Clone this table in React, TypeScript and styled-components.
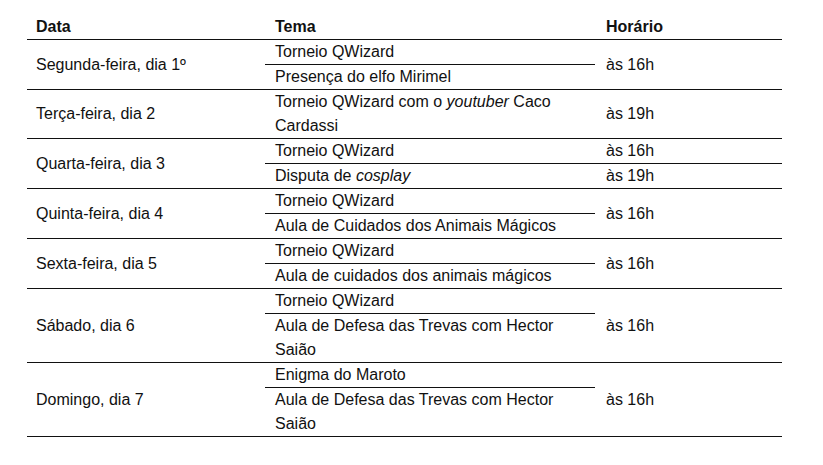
import React from 'react'
import styled, { createGlobalStyle, css } from 'styled-components'

const GlobalStyle = createGlobalStyle`
  html, body {
    margin: 0;
    background: #ffffff;
  }
  body {
    font-family: "Liberation Sans", Arial, Helvetica, sans-serif;
    color: #111111;
  }
`

const Page = styled.div`
  padding: 15px 0 0 27px;
`

const Table = styled.table`
  width: 755px;
  border-collapse: collapse;
  table-layout: fixed;
  font-size: 16px;
  line-height: 24px;

  th, td {
    box-sizing: border-box;
  }
`

const HeadRow = styled.tr`
  border-bottom: 1px solid #111;
`

const HeadCell = styled.th<{ $width: number; $pad: number }>`
  width: ${(p) => p.$width}px;
  padding: 0 0 0 ${(p) => p.$pad}px;
  text-align: left;
  font-weight: 700;
  vertical-align: middle;
`

const DayGroup = styled.tbody`
  border-bottom: 1px solid #111;
`

const DayCell = styled.td`
  padding: 0 0 0 9px;
  vertical-align: middle;
`

const dividedLine = css<{ $divided?: boolean }>`
  ${(p) => p.$divided && 'border-bottom: 1px solid #111;'}
`

const TopicCell = styled.td<{ $divided?: boolean }>`
  padding: 0 8px 0 10px;
  vertical-align: middle;
  ${dividedLine}
`

const TimeCell = styled.td<{ $divided?: boolean }>`
  padding: 0 0 0 11px;
  vertical-align: middle;
  ${dividedLine}
`

type Topic = { text: React.ReactNode; time?: string }
type Day = { day: string; topics: Topic[]; time?: string }

const days: Day[] = [
  {
    day: 'Segunda-feira, dia 1º',
    time: 'às 16h',
    topics: [{ text: 'Torneio QWizard' }, { text: 'Presença do elfo Mirimel' }],
  },
  {
    day: 'Terça-feira, dia 2',
    time: 'às 19h',
    topics: [
      {
        text: (
          <>
            Torneio QWizard com o <i>youtuber</i> Caco Cardassi
          </>
        ),
      },
    ],
  },
  {
    day: 'Quarta-feira, dia 3',
    topics: [
      { text: 'Torneio QWizard', time: 'às 16h' },
      {
        text: (
          <>
            Disputa de <i>cosplay</i>
          </>
        ),
        time: 'às 19h',
      },
    ],
  },
  {
    day: 'Quinta-feira, dia 4',
    time: 'às 16h',
    topics: [
      { text: 'Torneio QWizard' },
      { text: 'Aula de Cuidados dos Animais Mágicos' },
    ],
  },
  {
    day: 'Sexta-feira, dia 5',
    time: 'às 16h',
    topics: [
      { text: 'Torneio QWizard' },
      { text: 'Aula de cuidados dos animais mágicos' },
    ],
  },
  {
    day: 'Sábado, dia 6',
    time: 'às 16h',
    topics: [
      { text: 'Torneio QWizard' },
      { text: 'Aula de Defesa das Trevas com Hector Saião' },
    ],
  },
  {
    day: 'Domingo, dia 7',
    time: 'às 16h',
    topics: [
      { text: 'Enigma do Maroto' },
      { text: 'Aula de Defesa das Trevas com Hector Saião' },
    ],
  },
]

export default function App() {
  return (
    <Page>
      <GlobalStyle />
      <Table>
        <thead>
          <HeadRow>
            <HeadCell $width={238} $pad={9}>
              Data
            </HeadCell>
            <HeadCell $width={330} $pad={10}>
              Tema
            </HeadCell>
            <HeadCell $width={187} $pad={11}>
              Horário
            </HeadCell>
          </HeadRow>
        </thead>
        {days.map((d) => (
          <DayGroup key={d.day}>
            {d.topics.map((t, i) => {
              const notLast = i < d.topics.length - 1
              return (
                <tr key={i}>
                  {i === 0 && <DayCell rowSpan={d.topics.length}>{d.day}</DayCell>}
                  <TopicCell $divided={notLast}>{t.text}</TopicCell>
                  {d.time
                    ? i === 0 && <TimeCell rowSpan={d.topics.length}>{d.time}</TimeCell>
                    : <TimeCell $divided={notLast}>{t.time}</TimeCell>}
                </tr>
              )
            })}
          </DayGroup>
        ))}
      </Table>
    </Page>
  )
}
